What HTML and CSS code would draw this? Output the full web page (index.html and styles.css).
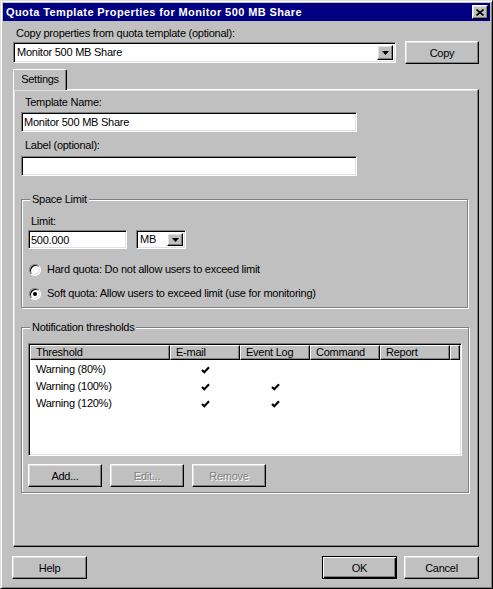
FILE: index.html
```html
<!DOCTYPE html>
<html lang="en">
<head>
<meta charset="utf-8">
<title>Quota Template Properties</title>
<link rel="stylesheet" href="styles.css">
</head>
<body>
<div class="window">
  <div class="titlebar">
    <span class="title">Quota Template Properties for Monitor 500 MB Share</span>
    <span class="close raised">
      <svg width="8" height="7" viewBox="0 0 8 7"><path d="M0.5 0.5 L7.5 6.5 M7.5 0.5 L0.5 6.5" stroke="#000" stroke-width="1.6" fill="none"/></svg>
    </span>
  </div>
  <div class="content">
    <div class="toplabel">Copy properties from quota template (optional):</div>
    <div class="copyrow">
      <div class="combo combo-wide">
        <span class="combo-text">Monitor 500 MB Share</span>
        <span class="ddbtn raised"><svg width="7" height="4" viewBox="0 0 7 4"><polygon points="0,0 7,0 3.5,4" fill="#000"/></svg></span>
      </div>
      <button class="btn btn-copy">Copy</button>
    </div>
    <div class="tabs"><div class="tab">Settings</div></div>
    <div class="panel">
      <div class="plabel">Template Name:</div>
      <input class="textbox" type="text" value="Monitor 500 MB Share">
      <div class="plabel plabel-2">Label (optional):</div>
      <input class="textbox textbox-2" type="text" value="">

      <div class="group group-space">
        <div class="gtitle">Space Limit</div>
        <div class="glabel">Limit:</div>
        <div class="limitrow">
          <input class="textbox limit-input" type="text" value="500.000">
          <div class="combo combo-unit">
            <span class="combo-text">MB</span>
            <span class="ddbtn raised"><svg width="7" height="4" viewBox="0 0 7 4"><polygon points="0,0 7,0 3.5,4" fill="#000"/></svg></span>
          </div>
        </div>
        <div class="radiorow radiorow-1"><span class="radio"></span><span>Hard quota: Do not allow users to exceed limit</span></div>
        <div class="radiorow radiorow-2"><span class="radio checked"></span><span>Soft quota: Allow users to exceed limit (use for monitoring)</span></div>
      </div>

      <div class="group group-notify">
        <div class="gtitle">Notification thresholds</div>
        <div class="listview">
          <div class="lv-header">
            <div class="hcell c1">Threshold</div>
            <div class="hcell c2">E-mail</div>
            <div class="hcell c2">Event Log</div>
            <div class="hcell c2">Command</div>
            <div class="hcell c2">Report</div>
            <div class="hcell cfill"></div>
          </div>
          <div class="lv-rows">
            <div class="lv-row">
              <div class="cell c1">Warning (80%)</div>
              <div class="cell c2 chk"><svg width="9" height="8" viewBox="0 0 9 8"><path d="M1 4 L3.3 6.3 L8 1.2" stroke="#000" stroke-width="2.1" fill="none"/></svg></div>
              <div class="cell c2"></div>
              <div class="cell c2"></div>
              <div class="cell c2"></div>
            </div>
            <div class="lv-row">
              <div class="cell c1">Warning (100%)</div>
              <div class="cell c2 chk"><svg width="9" height="8" viewBox="0 0 9 8"><path d="M1 4 L3.3 6.3 L8 1.2" stroke="#000" stroke-width="2.1" fill="none"/></svg></div>
              <div class="cell c2 chk"><svg width="9" height="8" viewBox="0 0 9 8"><path d="M1 4 L3.3 6.3 L8 1.2" stroke="#000" stroke-width="2.1" fill="none"/></svg></div>
              <div class="cell c2"></div>
              <div class="cell c2"></div>
            </div>
            <div class="lv-row">
              <div class="cell c1">Warning (120%)</div>
              <div class="cell c2 chk"><svg width="9" height="8" viewBox="0 0 9 8"><path d="M1 4 L3.3 6.3 L8 1.2" stroke="#000" stroke-width="2.1" fill="none"/></svg></div>
              <div class="cell c2 chk"><svg width="9" height="8" viewBox="0 0 9 8"><path d="M1 4 L3.3 6.3 L8 1.2" stroke="#000" stroke-width="2.1" fill="none"/></svg></div>
              <div class="cell c2"></div>
              <div class="cell c2"></div>
            </div>
          </div>
        </div>
        <div class="btnrow">
          <button class="btn btn-sm">Add...</button>
          <button class="btn btn-sm disabled">Edit...</button>
          <button class="btn btn-sm disabled">Remove</button>
        </div>
      </div>
    </div>
    <div class="footer">
      <button class="btn btn-ft">Help</button>
      <div class="spacer"></div>
      <button class="btn btn-ft default">OK</button>
      <button class="btn btn-ft">Cancel</button>
    </div>
  </div>
</div>
</body>
</html>
```

FILE: styles.css
```css
* { box-sizing: border-box; }
html, body { margin: 0; padding: 0; }
body {
  width: 493px;
  height: 589px;
  overflow: hidden;
  background: #c0c0c0;
  font-family: "Liberation Sans", Arial, sans-serif;
  font-size: 11px;
  letter-spacing: -0.25px;
  color: #000;
}

.window {
  width: 493px;
  height: 589px;
  background: #c0c0c0;
  border: 1px solid;
  border-color: #dfdfdf #000 #000 #dfdfdf;
  box-shadow: inset 1px 1px #fff, inset -1px -1px #808080;
  padding: 2px;
  display: flex;
  flex-direction: column;
}

.raised {
  background: #c0c0c0;
  border: 1px solid;
  border-color: #fff #000 #000 #fff;
  box-shadow: inset -1px -1px #808080, inset 1px 1px #dfdfdf;
}

.titlebar {
  height: 18px;
  flex: none;
  background: #000080;
  color: #fff;
  display: flex;
  align-items: center;
  justify-content: space-between;
  padding: 0 2px 0 3px;
  font-weight: bold;
  letter-spacing: 0.4px;
}
.title { line-height: 18px; white-space: nowrap; }
.close {
  width: 16px;
  height: 14px;
  display: flex;
  align-items: center;
  justify-content: center;
}
.close svg { display: block; }

.content {
  flex: 1;
  display: flex;
  flex-direction: column;
  padding: 0 11px 0 10px;
}

.toplabel {
  margin-top: 6px;
  line-height: 13px;
  padding-left: 3px;
}

.copyrow {
  display: flex;
  align-items: center;
  gap: 9px;
  margin-top: 1px;
  height: 23px;
}

.combo {
  background: #fff;
  border: 1px solid;
  border-color: #808080 #fff #fff #808080;
  box-shadow: inset 1px 1px #000, inset -1px -1px #dfdfdf;
  display: flex;
  align-items: center;
  padding: 2px;
}
.combo-wide { width: 383px; height: 21px; }
.combo-text {
  flex: 1;
  padding-left: 1px;
  line-height: 13px;
  white-space: nowrap;
}
.ddbtn {
  width: 16px;
  align-self: stretch;
  display: flex;
  align-items: center;
  justify-content: center;
}
.ddbtn svg { display: block; }

.btn {
  font: inherit;
  letter-spacing: inherit;
  color: #000;
  background: #c0c0c0;
  border: 1px solid;
  border-color: #fff #000 #000 #fff;
  box-shadow: inset -1px -1px #808080, inset 1px 1px #dfdfdf;
  padding: 0;
  margin: 0;
  height: 23px;
  text-align: center;
}
.btn-copy { width: 74px; }
.btn.disabled {
  color: #808080;
  text-shadow: 1px 1px #fff;
}
.btn.default {
  border: 1px solid #000;
  box-shadow: inset 1px 1px #fff, inset -1px -1px #000, inset -2px -2px #808080;
}

.tabs {
  display: flex;
  margin-top: 5px;
  margin-bottom: -1px;
  height: 21px;
  z-index: 1;
}
.tab {
  width: 54px;
  height: 21px;
  background: #c0c0c0;
  border-left: 1px solid #fff;
  border-top: 1px solid #fff;
  border-right: 1px solid #000;
  border-radius: 2px 2px 0 0;
  box-shadow: inset -1px 0 #808080;
  text-align: center;
  line-height: 18px;
}

.panel {
  flex: none;
  height: 458px;
  border: 1px solid;
  border-color: #fff #000 #000 #fff;
  box-shadow: inset -1px -1px #808080, inset 1px 1px #dfdfdf;
  padding: 6px 0 0 7px;
  display: flex;
  flex-direction: column;
  align-items: flex-start;
}

.plabel {
  line-height: 13px;
  padding-left: 4px;
}
.plabel-2 { margin-top: 7px; }

.textbox {
  font: inherit;
  letter-spacing: inherit;
  color: #000;
  background: #fff;
  border: 1px solid;
  border-color: #808080 #fff #fff #808080;
  box-shadow: inset 1px 1px #000, inset -1px -1px #dfdfdf;
  outline: none;
  margin: 3px 0 0 0;
  padding: 0 2px;
  width: 336px;
  height: 20px;
}
.textbox-2 { margin-top: 4px; }

.group {
  border: 1px solid #808080;
  box-shadow: inset 1px 1px #fff, 1px 1px #fff;
  padding: 0 0 0 6px;
  display: flex;
  flex-direction: column;
  align-items: flex-start;
}
.gtitle {
  margin: -7px 0 0 2px;
  padding: 0 2px;
  background: #c0c0c0;
  line-height: 13px;
  white-space: nowrap;
}
.group-space {
  width: 447px;
  margin-top: 23px;
  padding-bottom: 7px;
}
.glabel {
  margin-top: 9px;
  line-height: 13px;
  padding-left: 3px;
}
.limitrow {
  display: flex;
  gap: 9px;
  margin-top: 2px;
}
.limit-input {
  margin: 0;
  width: 99px;
  height: 19px;
}
.combo-unit { width: 50px; height: 19px; }

.radiorow {
  display: flex;
  align-items: center;
  gap: 6px;
  line-height: 13px;
  padding-left: 1px;
}
.radiorow-1 { margin-top: 14px; }
.radiorow-2 { margin-top: 11px; }
.radio {
  width: 12px;
  height: 12px;
  border-radius: 50%;
  background: #fff;
  border: 1px solid;
  border-color: #808080 #fff #fff #808080;
  box-shadow: inset 1px 1px #000, inset -1px -1px #dfdfdf;
  display: flex;
  align-items: center;
  justify-content: center;
}
.radio.checked::after {
  content: "";
  width: 4px;
  height: 4px;
  border-radius: 50%;
  background: #000;
}

.group-notify {
  width: 448px;
  margin-top: 19px;
  padding-bottom: 5px;
}
.listview {
  margin-top: 9px;
  width: 434px;
  height: 113px;
  background: #fff;
  border: 1px solid;
  border-color: #808080 #fff #fff #808080;
  box-shadow: inset 1px 1px #000, inset -1px -1px #dfdfdf;
  padding: 1px;
  overflow: hidden;
}
.lv-header {
  display: flex;
  height: 15px;
}
.hcell {
  background: #c0c0c0;
  border: 1px solid;
  border-color: #fff #000 #000 #fff;
  box-shadow: inset -1px -1px #808080;
  padding-left: 5px;
  line-height: 12px;
  white-space: nowrap;
}
.c1 { width: 140px; flex: none; }
.c2 { width: 70px; flex: none; }
.cfill { flex: 1; }
.lv-rows { padding-top: 1px; }
.lv-row {
  display: flex;
  height: 17px;
  align-items: center;
}
.cell { line-height: 13px; white-space: nowrap; }
.cell.c1 { padding-left: 6px; }
.cell.chk {
  display: flex;
  justify-content: center;
  align-items: center;
  height: 13px;
}
.cell.chk svg { display: block; }

.btnrow {
  display: flex;
  gap: 8px;
  margin-top: 8px;
}
.btn-sm { width: 74px; }

.footer {
  display: flex;
  gap: 7px;
  margin-top: 9px;
  margin-left: -1px;
}
.spacer { flex: 1; }
.btn-ft { width: 75px; }
```
